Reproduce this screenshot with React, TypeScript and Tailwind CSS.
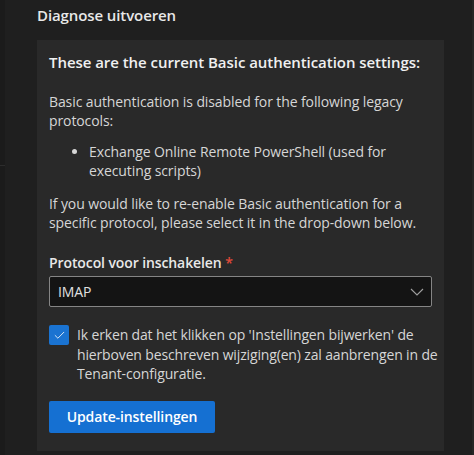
import { Check } from "lucide-react";

export default function App() {
  return (
    <div className="flex h-[455px] w-[474px] overflow-hidden bg-[#1f1f1f] font-['Open_Sans',sans-serif] text-[14px] tracking-[-0.1px] text-[#d6d6d6]">
      {/* left nav edge */}
      <div className="flex w-[5px] flex-col bg-[#1b1b1b]">
        <div className="h-[165px]" />
        <div className="h-px bg-[#2c2c2c]" />
      </div>

      <div className="flex flex-1 flex-col pl-[32px] pr-[28px]">
        <h2 className="pt-[4px] text-[15px] font-semibold leading-[22px] text-[#e8e8e8]">
          Diagnose uitvoeren
        </h2>

        <div className="mt-[14px] bg-[#292929] px-[12px] pb-[18px] pt-[11px]">
          <h3 className="text-[15px] font-semibold leading-[22px] tracking-[-0.05px] text-[#f0f0f0]">
            These are the current Basic authentication settings:
          </h3>

          <p className="mt-[19px] leading-[19px]">
            Basic authentication is disabled for the following legacy protocols:
          </p>

          <ul className="mt-[12px] list-disc pl-[40px] leading-[19px]">
            <li>Exchange Online Remote PowerShell (used for executing scripts)</li>
          </ul>

          <p className="mt-[14px] leading-[19px]">
            If you would like to re-enable Basic authentication for a specific protocol, please select it in the drop-down below.
          </p>

          <label className="mt-[21px] block font-semibold leading-[20px] text-[#e8e8e8]">
            Protocol voor inschakelen <span className="text-[#e0493a]">*</span>
          </label>

          <div className="mt-[3px] flex h-[31px] items-center justify-between rounded-[2px] border border-[#858585] bg-[#141414] pl-[8px] pr-[6px]">
            <span className="text-[#e0e0e0]">IMAP</span>
            <svg width="14" height="8" viewBox="0 0 14 8" className="mr-[1px]">
              <path d="M1 1 L7 7 L13 1" fill="none" stroke="#a0a0a0" strokeWidth="1.1" />
            </svg>
          </div>

          <div className="mt-[18px] flex gap-[8px]">
            <div className="flex h-[20px] w-[20px] shrink-0 items-center justify-center rounded-[2px] bg-[#1a73d1]">
              <Check size={13} strokeWidth={1.5} className="text-white" />
            </div>
            <p className="mr-[-8px] leading-[19.5px] tracking-[-0.15px]">
              Ik erken dat het klikken op 'Instellingen bijwerken' de hierboven beschreven wijziging(en) zal aanbrengen in de Tenant-configuratie.
            </p>
          </div>

          <button className="mt-[17px] h-[32px] w-[166px] rounded-[2px] bg-[#1570d2] font-semibold text-white">
            Update-instellingen
          </button>
        </div>
      </div>

      <div className="w-[2px] bg-[#262626]" />
    </div>
  );
}
